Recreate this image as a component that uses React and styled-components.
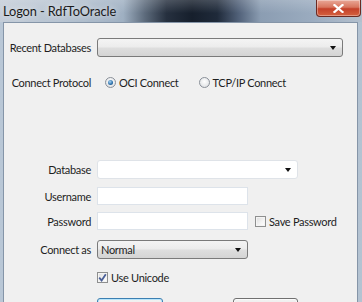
import React from "react";
import styled, { createGlobalStyle } from "styled-components";

const Global = createGlobalStyle`
  html, body { margin: 0; padding: 0; background: #f0f0f0; }
  * { box-sizing: border-box; }
`;

const Window = styled.div`
  width: 362px;
  height: 302px;
  overflow: hidden;
  display: flex;
  flex-direction: column;
  font-family: Lato, "Liberation Sans", sans-serif;
  font-size: 11px;
  letter-spacing: -0.3px;
  color: #1e1e1e;
  background: linear-gradient(90deg, #b9c7d6 0%, #a9bacb 50%, #b4c3d2 100%);
`;

const TitleBar = styled.div`
  height: 22px;
  flex: none;
  display: flex;
  align-items: flex-start;
  justify-content: space-between;
  background:
    linear-gradient(180deg, rgba(255,255,255,0.18) 0%, rgba(255,255,255,0) 60%),
    linear-gradient(90deg, #c4cdd8 0%, #b5c2d0 18%, #9fb0c2 34%, #5d6b7c 40%, #26303f 46%, #161f2c 53%, #1f2a3a 60%, #52627a 66%, #8b9db2 72%, #9aabbf 86%, #b4c0cd 100%);
`;

const Title = styled.span`
  padding: 3px 0 0 3px;
  font-size: 12.8px;
  letter-spacing: -0.1px;
  color: #1a1a1a;
  text-shadow: 0 0 6px rgba(255,255,255,0.9);
`;

const CloseButton = styled.div`
  width: 45px;
  height: 17px;
  margin-right: 1px;
  display: flex;
  align-items: center;
  justify-content: center;
  border: 1px solid #6b2a22;
  border-top: none;
  border-radius: 0 0 4px 4px;
  background: linear-gradient(180deg, #e9a898 0%, #d8765f 45%, #c4412a 55%, #d5613f 100%);
  box-shadow: inset 0 0 0 1px rgba(255,255,255,0.35);
`;

const Body = styled.div`
  flex: 1;
  display: flex;
  padding: 0 4px 0 3px;
`;

const Client = styled.div`
  flex: 1;
  background: #f0f0f0;
  border: 1px solid #8595a8;
  border-bottom: none;
  display: flex;
  flex-direction: column;
  padding-top: 15px;
`;

const Row = styled.div`
  display: grid;
  grid-template-columns: 88px auto;
  column-gap: 5px;
  align-items: center;
  justify-items: start;
  height: ${(p) => p.$h || 19}px;
  margin-top: ${(p) => p.$mt || 0}px;
`;

const Label = styled.span`
  justify-self: end;
  white-space: nowrap;
  padding-right: 1px;
`;

const Fields = styled.div`
  display: flex;
  align-items: center;
  height: 100%;
`;

const Combo = styled.div`
  width: ${(p) => p.$w}px;
  height: 100%;
  display: flex;
  align-items: center;
  justify-content: space-between;
  padding: 0 6px 0 3px;
  border-radius: 3px;
  border: 1px solid ${(p) => (p.$editable ? "#dfe3e8" : "#7a7a7a")};
  background: ${(p) =>
    p.$editable
      ? "#ffffff"
      : "linear-gradient(180deg, #f4f4f4 0%, #ececec 48%, #dedede 52%, #d4d4d4 100%)"};
`;

const Arrow = styled.span`
  width: 0;
  height: 0;
  border-left: 3.5px solid transparent;
  border-right: 3.5px solid transparent;
  border-top: 4px solid #111;
  margin-top: 1px;
`;

const TextInput = styled.div`
  width: ${(p) => p.$w}px;
  height: 100%;
  background: #fff;
  border: 1px solid #dde3ea;
`;

const RadioOption = styled.label`
  display: flex;
  align-items: center;
  gap: 3px;
  margin-left: ${(p) => p.$ml || 0}px;
`;

const RadioCircle = styled.span`
  width: 11px;
  height: 11px;
  border-radius: 50%;
  border: 1px solid #8a9099;
  background: radial-gradient(circle at 50% 40%, #ffffff 0%, #e4e6e8 70%, #cfd2d6 100%);
  display: flex;
  align-items: center;
  justify-content: center;
  &::after {
    content: "";
    display: ${(p) => (p.$on ? "block" : "none")};
    width: 5px;
    height: 5px;
    border-radius: 50%;
    background: radial-gradient(circle at 40% 35%, #a8d4f4 0%, #2b6ea8 60%, #123f6d 100%);
  }
`;

const CheckOption = styled.label`
  display: flex;
  align-items: center;
  gap: 3px;
  margin-left: ${(p) => p.$ml || 0}px;
`;

const CheckBox = styled.span`
  width: 11px;
  height: 11px;
  border: 1px solid #8e8f8f;
  background: linear-gradient(135deg, #dcdcdc 0%, #f4f4f4 60%, #ffffff 100%);
  display: flex;
  align-items: center;
  justify-content: center;
  box-shadow: inset 0 0 0 1px #f4f4f4;
`;

const Spacer = styled.span`
  width: ${(p) => p.$w}px;
`;

const ButtonRow = styled.div`
  display: flex;
  margin-left: 93px;
  margin-top: ${(p) => p.$mt}px;
  gap: 70px;
`;

const Button = styled.div`
  width: ${(p) => p.$w}px;
  height: 23px;
  border-radius: 3px;
  border: 1px solid ${(p) => (p.$focus ? "#3c7fb1" : "#707070")};
  background: linear-gradient(180deg, #f2f2f2 0%, #ebebeb 45%, #dddddd 55%, #cfcfcf 100%);
  box-shadow: inset 0 0 0 1px ${(p) => (p.$focus ? "#b9e5fb" : "#fbfbfb")};
  display: flex;
  justify-content: center;
  padding-top: 3px;
`;

const ButtonIcon = styled.span`
  width: 12px;
  height: 12px;
  border-radius: 50%;
  margin-left: ${(p) => p.$ml}px;
  background: ${(p) => p.$c};
`;

export default function App() {
  return (
    <>
      <Global />
      <Window>
        <TitleBar>
          <Title>Logon - RdfToOracle</Title>
          <CloseButton>
            <svg width="11" height="9" viewBox="0 0 11 9">
              <path d="M1.5 1 L9.5 8 M9.5 1 L1.5 8" stroke="#fff" strokeWidth="2.2" strokeLinecap="square" />
            </svg>
          </CloseButton>
        </TitleBar>
        <Body>
          <Client>
            <Row $h={19}>
              <Label>Recent Databases</Label>
              <Combo $w={246}>
                <span />
                <Arrow />
              </Combo>
            </Row>
            <Row $h={19} $mt={16}>
              <Label>Connect Protocol</Label>
              <Fields>
                <RadioOption $ml={8}>
                  <RadioCircle $on />
                  OCI Connect
                </RadioOption>
                <RadioOption $ml={20}>
                  <RadioCircle />
                  TCP/IP Connect
                </RadioOption>
              </Fields>
            </Row>
            <Row $h={19} $mt={68}>
              <Label>Database</Label>
              <Combo $w={201} $editable>
                <span />
                <Arrow />
              </Combo>
            </Row>
            <Row $h={18} $mt={8}>
              <Label>Username</Label>
              <TextInput $w={151} />
            </Row>
            <Row $h={18} $mt={7}>
              <Label>Password</Label>
              <Fields>
                <TextInput $w={151} />
                <CheckOption $ml={7}>
                  <CheckBox />
                  Save Password
                </CheckOption>
              </Fields>
            </Row>
            <Row $h={19} $mt={10}>
              <Label>Connect as</Label>
              <Combo $w={151}>
                <span>Normal</span>
                <Arrow />
              </Combo>
            </Row>
            <Row $h={18} $mt={9}>
              <Spacer $w={1} />
              <CheckOption>
                <CheckBox>
                  <svg width="9" height="9" viewBox="0 0 9 9">
                    <path d="M1.2 4.6 L3.6 7.4 L7.8 1.2" fill="none" stroke="#4a5f97" strokeWidth="1.8" />
                  </svg>
                </CheckBox>
                Use Unicode
              </CheckOption>
            </Row>
            <ButtonRow $mt={12}>
              <Button $w={66} $focus>
                <ButtonIcon $ml={-14} $c="radial-gradient(circle at 50% 30%, #d7f0a8, #7fb843)" />
              </Button>
              <Button $w={65}>
                <ButtonIcon $ml={-14} $c="radial-gradient(circle at 50% 30%, #c8f0ff, #3aa6d8)" />
              </Button>
            </ButtonRow>
          </Client>
        </Body>
      </Window>
    </>
  );
}
